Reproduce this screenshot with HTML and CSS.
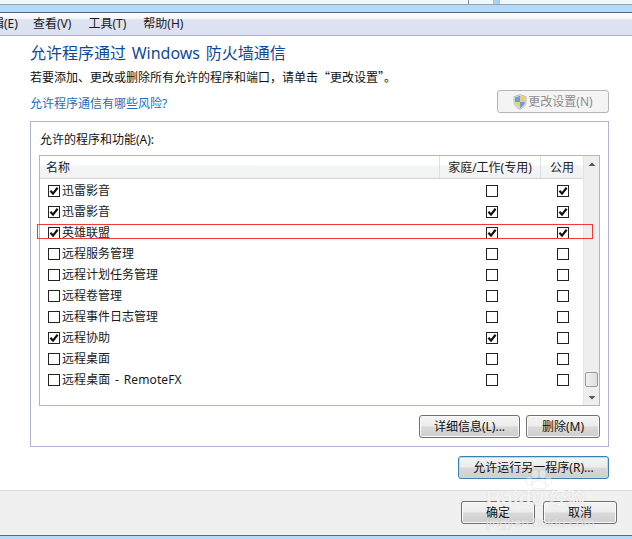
FILE: index.html
```html
<!DOCTYPE html>
<html lang="zh-CN">
<head>
<meta charset="utf-8">
<title>允许程序通过 Windows 防火墙通信</title>
<link rel="stylesheet" href="styles.css">
</head>
<body>
<svg class="defs" width="0" height="0" aria-hidden="true">
  <symbol id="tick" viewBox="0 0 12 12"><path d="M2.4 5.8 L5 8.6 L9.6 2.8" fill="none" stroke="#111" stroke-width="2.2"/></symbol>
</svg>
<div class="window">
  <div class="topstrip"><div class="seg seg-a"></div><div class="seg seg-b"></div><div class="seg seg-c"></div></div>
  <div class="bluebar"></div>
  <nav class="menu"><span class="m-first">辑(E)</span><span>查看(V)</span><span>工具(T)</span><span>帮助(H)</span></nav>
  <main class="content">
    <h1 class="title">允许程序通过 Windows 防火墙通信</h1>
    <p class="desc">若要添加、更改或删除所有允许的程序和端口，请单击“更改设置”。</p>
    <div class="linkrow">
      <a class="link">允许程序通信有哪些风险?</a>
      <div class="btn btn-settings">
        <svg class="shield" width="14" height="16" viewBox="0 0 14 16"><path d="M7 .7 L13 2.6 V8 C13 11.6 10 14 7 15.3 C4 14 1 11.6 1 8 V2.6 Z" fill="#dfe3e6" stroke="#a9b2ba" stroke-width=".8"/><path d="M7 1.8 V8 H2 V3.4 Z" fill="#6f9fce"/><path d="M7 8 H12 C11.8 10.8 9.4 13 7 14.2 Z" fill="#6f9fce"/><path d="M7 1.8 L12 3.4 V8 H7 Z" fill="#e8cf73"/><path d="M7 8 V14.2 C4.6 13 2.2 10.8 2 8 Z" fill="#e8cf73"/></svg>
        <span>更改设置(N)</span>
      </div>
    </div>
    <section class="group">
      <div class="group-label">允许的程序和功能(A):</div>
      <div class="listbox">
        <div class="table">
          <div class="thead"><div class="th th-name">名称</div><div class="th">家庭/工作(专用)</div><div class="th">公用</div></div>
          <div class="row"><div class="name"><span class="cb"><svg><use href="#tick"/></svg></span>迅雷影音</div><div class="cell"><span class="cb"></span></div><div class="cell"><span class="cb"><svg><use href="#tick"/></svg></span></div></div>
          <div class="row"><div class="name"><span class="cb"><svg><use href="#tick"/></svg></span>迅雷影音</div><div class="cell"><span class="cb"><svg><use href="#tick"/></svg></span></div><div class="cell"><span class="cb"><svg><use href="#tick"/></svg></span></div></div>
          <div class="row"><div class="name"><span class="cb"><svg><use href="#tick"/></svg></span>英雄联盟</div><div class="cell"><span class="cb"><svg><use href="#tick"/></svg></span></div><div class="cell"><span class="cb"><svg><use href="#tick"/></svg></span></div></div>
          <div class="row"><div class="name"><span class="cb"></span>远程服务管理</div><div class="cell"><span class="cb"></span></div><div class="cell"><span class="cb"></span></div></div>
          <div class="row"><div class="name"><span class="cb"></span>远程计划任务管理</div><div class="cell"><span class="cb"></span></div><div class="cell"><span class="cb"></span></div></div>
          <div class="row"><div class="name"><span class="cb"></span>远程卷管理</div><div class="cell"><span class="cb"></span></div><div class="cell"><span class="cb"></span></div></div>
          <div class="row"><div class="name"><span class="cb"></span>远程事件日志管理</div><div class="cell"><span class="cb"></span></div><div class="cell"><span class="cb"></span></div></div>
          <div class="row"><div class="name"><span class="cb"><svg><use href="#tick"/></svg></span>远程协助</div><div class="cell"><span class="cb"><svg><use href="#tick"/></svg></span></div><div class="cell"><span class="cb"></span></div></div>
          <div class="row"><div class="name"><span class="cb"></span>远程桌面</div><div class="cell"><span class="cb"></span></div><div class="cell"><span class="cb"></span></div></div>
          <div class="row"><div class="name"><span class="cb"></span><span class="spaced">远程桌面 - RemoteFX</span></div><div class="cell"><span class="cb"></span></div><div class="cell"><span class="cb"></span></div></div>
        </div>
        <div class="scrollbar">
          <svg class="arrow" width="16" height="16" viewBox="0 0 16 16"><path d="M4.5 10 L8 6.5 L11.5 10 Z" fill="#555"/></svg>
          <div class="track"></div>
          <div class="thumb"></div>
          <svg class="arrow" width="16" height="16" viewBox="0 0 16 16"><path d="M4.5 7 L8 10.5 L11.5 7 Z" fill="#555"/></svg>
        </div>
      </div>
      <div class="group-actions">
        <div class="btn btn-details">详细信息(L)...</div>
        <div class="btn btn-delete">删除(M)</div>
      </div>
    </section>
    <div class="another-row"><div class="btn btn-another">允许运行另一程序(R)...</div></div>
  </main>
  <footer class="footer">
    <div class="btn btn-foot">确定</div>
    <div class="btn btn-foot">取消</div>
  </footer>
  <div class="bottombar"></div>
  <div class="highlight"></div>
  <div class="watermark">
    <svg class="paw" width="31" height="20" viewBox="0 0 36 24"><g fill="#fff" fill-opacity=".4" stroke="#a8a8a8" stroke-opacity=".35" stroke-width=".7"><ellipse cx="7" cy="13" rx="4" ry="5"/><ellipse cx="14" cy="5" rx="4" ry="5"/><ellipse cx="23" cy="5" rx="4" ry="5"/><ellipse cx="30" cy="13" rx="4" ry="5"/><path d="M18 12 C13 12 10 17 10 20 C10 24 15 23 18 22 C21 23 27 24 27 20 C27 17 23 12 18 12 Z"/></g></svg>
    <div class="wm-main"><span class="wm-baidu">Baidu</span><span class="wm-jy">经验</span></div>
    <div class="wm-sub">jingyan.baidu.com</div>
  </div>
</div>
</body>
</html>
```

FILE: styles.css
```css
* { box-sizing: border-box; }
html, body { margin: 0; padding: 0; }
body {
  width: 632px; height: 539px; overflow: hidden; background: #fff; color: #111;
  font: 12px/16px "Noto Sans", "Noto Sans CJK SC", sans-serif;
}
.defs { position: absolute; }
.window { position: relative; width: 632px; height: 539px; display: flex; flex-direction: column; }

.topstrip { height: 5px; display: flex; background: #f1f6f9; border-bottom: 1px solid #8fa5b5; }
.seg { height: 4px; }
.seg-a { width: 469px; border-right: 1px solid #7d8a94; }
.seg-b { width: 25px; border-right: 1px solid #b8c4ce; }
.seg-c { width: 6px; background: #a9d0f2; border-right: 1px solid #b8c4ce; }
.bluebar { height: 8px; background: #b5d9f8; border-bottom: 1px solid #4f6b80; }

.menu {
  height: 23px; display: flex; align-items: center; gap: 17px;
  background: linear-gradient(#fdfeff 0, #f3f5fa 25%, #dfe4f3 30%, #dbe1f2 100%);
  border-bottom: 1px solid #aeb4c6; color: #1a1a1a; font-size: 12px;
}
.menu span { white-space: nowrap; }
.m-first { width: 24px; margin-left: -8px; flex: none; }

.content { flex: 1; padding: 6px 23px 0 30px; display: flex; flex-direction: column; min-height: 0; }
.title { margin: 0; font-size: 16px; font-weight: 400; line-height: 22px; color: #0f4a99; white-space: nowrap; word-spacing: 1.5px; }
.desc { margin: 4px 0 0; line-height: 18px; white-space: nowrap; font-family: "Noto Sans CJK SC", sans-serif; }
.linkrow { display: flex; justify-content: space-between; align-items: flex-start; margin-top: 4px; height: 31px; }
.link { color: #1d70bd; margin-top: 5px; line-height: 18px; }

.btn {
  display: flex; align-items: center; justify-content: center; white-space: nowrap; flex: none;
  border: 1px solid #707070; border-radius: 3px; color: #111;
  background: linear-gradient(#f4f4f4 0, #ececec 48%, #d9d9d9 52%, #cfcfcf 100%);
  box-shadow: inset 0 0 0 1px #fbfbfb;
}
.btn-settings {
  width: 112px; height: 23px; gap: 1px; color: #8e8e8e;
  border-color: #b5b5b5; background: #f4f4f4; box-shadow: none;
}
.shield { flex: none; }

.group { height: 326px; border: 1px solid #adb2d6; padding: 0 8px; flex: none; }
.group-label { height: 33px; padding: 9px 0 0 1px; line-height: 18px; }
.listbox { display: flex; height: 251px; border: 1px solid #adb2d6; }
.table { flex: 1; min-width: 0; }
.thead {
  display: grid; grid-template-columns: 400px 101px 43px; height: 23px; margin-bottom: 1px;
  background: linear-gradient(#fff 0, #fff 40%, #f4f5f6 45%, #f1f2f3 100%);
  border-bottom: 1px solid #d5d5d5;
}
.th { display: flex; align-items: center; justify-content: center; padding-top: 1px; border-right: 1px solid #dcdfe3; white-space: nowrap; color: #222; }
.th-name { justify-content: flex-start; padding-left: 6px; }
.row { display: grid; grid-template-columns: 400px 101px 43px; height: 21px; align-items: center; }
.name { display: flex; align-items: center; padding-left: 8px; gap: 2px; white-space: nowrap; color: #1a1a1a; }
.spaced { word-spacing: 1.5px; letter-spacing: .1px; }
.cell { display: flex; justify-content: center; }
.cell:nth-child(2) { padding-left: 2px; }
.cb { width: 12px; height: 12px; border: 1px solid #222; background: #fff; display: block; flex: none; position: relative; }
.cb svg { position: absolute; left: -1px; top: -1px; width: 12px; height: 12px; display: block; }
.scrollbar { width: 16px; flex: none; background: #eeeeee; display: flex; flex-direction: column; border-left: 1px solid #e4e4e4; }
.arrow { flex: none; display: block; }
.track { flex: 1; }
.thumb { height: 15px; margin: 0 1px 2px; border: 1px solid #9b9b9b; border-radius: 2px; background: linear-gradient(90deg, #f2f2f2, #dcdcdc); }
.group-actions { display: flex; justify-content: flex-end; gap: 6px; margin-top: 9px; }
.btn-details { width: 101px; height: 23px; }
.btn-delete { width: 74px; height: 23px; }

.another-row { display: flex; justify-content: flex-end; margin-top: 9px; }
.btn-another {
  width: 151px; height: 23px; border-color: #3c7fb1;
  box-shadow: inset 0 0 0 1px #a8e4f6;
}

.footer {
  height: 45px; flex: none; display: flex; justify-content: flex-end; gap: 8px; padding: 10px 15px 0 0;
  background: #f0f0f0; border-top: 1px solid #d8d8d8;
}
.btn-foot { width: 74px; height: 23px; }
.bottombar { height: 4px; flex: none; background: #b5d9f8; border-top: 1px solid #5b6b78; }

.highlight { position: absolute; left: 37px; top: 224px; width: 556px; height: 15px; border: 1px solid #f03a3a; }

.watermark { position: absolute; left: 486px; top: 470px; width: 112px; pointer-events: none; color: rgba(255,255,255,.75); display: flex; flex-direction: column; text-shadow: 0 0 1px rgba(170,170,170,.5); }
.paw { display: block; margin-left: 37px; }
.wm-main { display: flex; align-items: center; gap: 5px; height: 19px; white-space: nowrap; margin-top: -2px; }
.wm-baidu { font: 700 21px/19px "Liberation Sans", sans-serif; }
.wm-jy { font: 700 18px/19px "Noto Sans CJK SC", sans-serif; }
.wm-sub { font: 13.5px/14px "Liberation Sans", sans-serif; white-space: nowrap; margin-top: 9px; color: rgba(255,255,255,.55); }
```
